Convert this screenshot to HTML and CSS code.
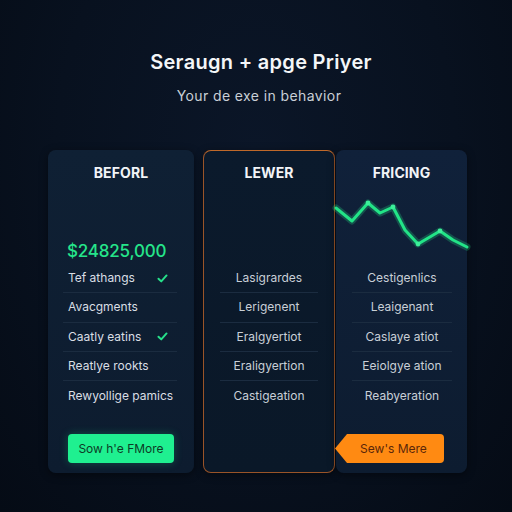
FILE: index.html
```html
<!DOCTYPE html>
<html>
<head>
<meta charset="utf-8">
<link rel="stylesheet" href="styles.css">
</head>
<body>
<div class="page">
  <header class="hero">
    <h1 class="title">Seraugn + apge Priyer</h1>
    <p class="subtitle">Your de exe in behavior</p>
  </header>
  <section class="cards">
    <div class="card card-before">
      <div class="card-head">BEFORL</div>
      <div class="price">$24825,000</div>
      <ul class="rows rows-left">
        <li class="row">Tef athangs <svg class="check" viewBox="0 0 12 10"><path d="M1.5 5.2 L4.6 8.2 L10.5 1.6" /></svg></li>
        <li class="row">Avacgments</li>
        <li class="row">Caatly eatins <svg class="check" viewBox="0 0 12 10"><path d="M1.5 5.2 L4.6 8.2 L10.5 1.6" /></svg></li>
        <li class="row">Reatlye rookts</li>
        <li class="row">Rewyollige pamics</li>
      </ul>
      <div class="btn-wrap"><button class="btn btn-green">Sow h'e FMore</button></div>
    </div>
    <div class="card card-lever">
      <div class="card-head">LEWER</div>
      <div class="spacer"></div>
      <ul class="rows rows-center narrow">
        <li class="row">Lasigrardes</li>
        <li class="row">Lerigenent</li>
        <li class="row">Eralgyertiot</li>
        <li class="row">Eraligyertion</li>
        <li class="row">Castigeation</li>
      </ul>
    </div>
    <div class="card card-pricing">
      <div class="card-head">FRICING</div>
      <svg class="chart" viewBox="0 0 131 66" preserveAspectRatio="none">
        <polyline class="chart-glow" points="0,18 16,31 32,13 44,23 57,17 69,40 82,54 104,41 117,50 131,57" />
        <polyline class="chart-line" points="0,18 16,31 32,13 44,23 57,17 69,40 82,54 104,41 117,50 131,57" />
        <circle class="dot" cx="32" cy="13" r="2.4"/>
        <circle class="dot" cx="57" cy="17" r="2.4"/>
        <circle class="dot" cx="82" cy="54" r="2.4"/>
        <circle class="dot" cx="104" cy="41" r="2.4"/>
      </svg>
      <ul class="rows rows-center wide">
        <li class="row">Cestigenlics</li>
        <li class="row">Leaigenant</li>
        <li class="row">Caslaye atiot</li>
        <li class="row">Eeiolgye ation</li>
        <li class="row">Reabyeration</li>
      </ul>
      <div class="btn-wrap btn-wrap-arrow"><button class="btn btn-orange">Sew's Mere</button></div>
    </div>
  </section>
</div>
</body>
</html>
```

FILE: styles.css
```css
* { box-sizing: border-box; }
html, body {
  margin: 0;
  padding: 0;
  width: 512px;
  height: 512px;
  overflow: hidden;
}
body {
  background: radial-gradient(ellipse at 50% 30%, #0b1628 0%, #08111f 55%, #050b15 100%);
  font-family: Inter, "Open Sans", "Liberation Sans", sans-serif;
  color: #fff;
}
.page {
  display: flex;
  flex-direction: column;
  height: 512px;
}
.hero {
  text-align: center;
  padding-top: 49px;
}
.title {
  margin: 0;
  font-size: 20px;
  line-height: 26px;
  font-weight: 600;
  letter-spacing: 0.3px;
  color: #f4f6f8;
  padding-left: 10px;
}
.subtitle {
  margin: 12px 0 0;
  font-size: 14px;
  line-height: 18px;
  color: #c9cfd6;
  letter-spacing: 0.4px;
  padding-left: 6px;
}
.cards {
  display: flex;
  margin-top: 45px;
  padding-left: 48px;
  align-items: flex-start;
}
.card {
  height: 323px;
  border-radius: 8px;
  display: flex;
  flex-direction: column;
  position: relative;
}
.card-before {
  width: 146px;
  background: linear-gradient(180deg, #0f2034 0%, #0d1c2f 100%);
  box-shadow: 0 2px 8px rgba(0,0,0,0.45);
}
.card-lever {
  width: 132px;
  margin-left: 9px;
  border: 1px solid #9a5428;
  border-top-color: #c0692a;
  background: linear-gradient(180deg, #0b1a2c 0%, #0a1828 100%);
  box-shadow: 0 2px 8px rgba(0,0,0,0.45);
}
.card-pricing {
  width: 131px;
  margin-left: 1px;
  background: linear-gradient(180deg, #10213a 0%, #0d1c30 100%);
  box-shadow: 0 2px 8px rgba(0,0,0,0.45);
}
.card-head {
  padding-top: 14px;
  height: 32px;
  line-height: 18px;
  font-size: 14px;
  font-weight: 700;
  text-align: center;
  color: #f2f4f7;
  letter-spacing: 0.1px;
}
.card-lever .card-head { margin-top: -1px; }
.price {
  margin-top: 58px;
  height: 22px;
  line-height: 22px;
  font-size: 17px;
  font-weight: 500;
  color: #25e58a;
  padding-left: 19px;
  letter-spacing: -0.2px;
}
.spacer { height: 82px; }
.chart {
  display: block;
  width: 131px;
  height: 66px;
  margin-top: 8px;
  margin-bottom: 8px;
  overflow: visible;
}
.chart-line {
  fill: none;
  stroke: #22e487;
  stroke-width: 3;
  stroke-linejoin: round;
  stroke-linecap: round;
}
.chart-glow {
  fill: none;
  stroke: rgba(34, 228, 135, 0.25);
  stroke-width: 7;
  stroke-linejoin: round;
  stroke-linecap: round;
}
.dot { fill: #3cf09a; }
.rows {
  list-style: none;
  margin: 0;
  padding: 0;
}
.row {
  height: 29.3px;
  line-height: 28px;
  font-size: 12px;
  color: #d9dee4;
  border-bottom: 1px solid #1b2c40;
  display: flex;
  align-items: center;
  white-space: nowrap;
}
.row:last-child { border-bottom: none; }
.rows-left {
  margin: 2px 17px 0 15px;
}
.rows-left .row {
  padding-left: 5px;
  padding-right: 9px;
}
.rows-left .check { margin-left: auto; }
.rows-center .row {
  justify-content: center;
  color: #c8cfd7;
}
.narrow { margin: 0 16px 0 16px; }
.wide { margin: 0 15px 0 16px; }
.check {
  width: 11px;
  height: 9px;
  flex: none;
}
.check path {
  fill: none;
  stroke: #26e08a;
  stroke-width: 2.2;
  stroke-linecap: round;
  stroke-linejoin: round;
}
.btn-wrap {
  margin-top: auto;
  padding-bottom: 10px;
  display: flex;
}
.card-before .btn-wrap { padding-left: 20px; }
.btn {
  border: none;
  height: 29px;
  font-family: inherit;
  font-size: 12px;
  padding: 0;
  cursor: pointer;
}
.btn-green {
  width: 106px;
  background: #1ff090;
  color: #0d3b26;
  border-radius: 4px;
  box-shadow: 0 0 8px rgba(31, 240, 144, 0.25);
}
.btn-wrap-arrow { margin-left: -1px; }
.btn-orange {
  width: 109px;
  background: #ff8a12;
  color: #5b2709;
  clip-path: polygon(12px 0, 100% 0, 100% 100%, 12px 100%, 0 50%);
  border-radius: 0 4px 4px 0;
  padding-left: 8px;
}
```
